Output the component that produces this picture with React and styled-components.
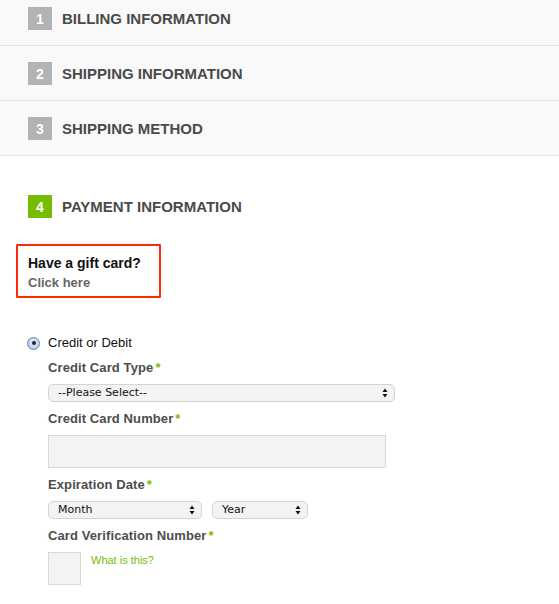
import React from "react";
import styled, { createGlobalStyle } from "styled-components";

const Global = createGlobalStyle`
  html, body { margin: 0; padding: 0; background: #fff; }
  body { font-family: "Liberation Sans", Arial, sans-serif; overflow: hidden; }
`;

const Page = styled.div`
  width: 559px;
  margin-top: -9px;
`;

const Step = styled.div`
  display: flex;
  align-items: center;
  gap: 10px;
  padding: ${(p) => (p.$active ? "39px 28px 26px" : "16px 28px 15px")};
  background: ${(p) => (p.$active ? "#fff" : "#f9f9f9")};
  border-bottom: ${(p) => (p.$active ? "none" : "1px solid #e6e6e6")};
`;

const Badge = styled.span`
  width: 24px;
  height: 23px;
  display: flex;
  align-items: center;
  justify-content: center;
  background: ${(p) => (p.$active ? "#78bc00" : "#b3b3b3")};
  color: #fff;
  font-weight: bold;
  font-size: 14px;
`;

const StepTitle = styled.span`
  font-size: 15px;
  font-weight: bold;
  color: #4a4a4a;
  text-transform: uppercase;
`;

const GiftBox = styled.div`
  margin-left: 16px;
  width: 131px;
  border: 2px solid #ff2a0a;
  border-radius: 1px;
  padding: 8px 0 4px 10px;
`;

const GiftTitle = styled.div`
  font-size: 14px;
  line-height: 18px;
  font-weight: bold;
  color: #111;
`;

const GiftLink = styled.a`
  display: block;
  margin-top: 2px;
  font-size: 13px;
  line-height: 18px;
  font-weight: bold;
  color: #666;
  text-decoration: none;
`;

const Form = styled.div`
  padding-top: 37px;
`;

const RadioRow = styled.label`
  display: flex;
  align-items: center;
  gap: 8px;
  padding-left: 27px;
  font-size: 13px;
  line-height: 16px;
  color: #111;
`;

const Radio = styled.span`
  width: 13px;
  height: 13px;
  box-sizing: border-box;
  border-radius: 50%;
  border: 1px solid #6d7f9c;
  background: radial-gradient(circle at 50% 40%, #eaf2fc 0%, #b7cfee 70%, #9fbde6 100%);
  display: flex;
  align-items: center;
  justify-content: center;
  &::after {
    content: "";
    width: 4px;
    height: 4px;
    border-radius: 50%;
    background: #1c2433;
  }
`;

const Fields = styled.div`
  padding-left: 48px;
  display: flex;
  flex-direction: column;
`;

const Field = styled.div`
  margin-top: 9px;
  display: flex;
  flex-direction: column;
  align-items: flex-start;
`;

const Label = styled.div`
  font-size: 13px;
  line-height: 16px;
  font-weight: bold;
  color: #4d4d4d;
  letter-spacing: 0.1px;
  margin-bottom: 8px;
`;

const Req = styled.span`
  color: #78bc00;
  margin-left: 2px;
`;

const SelectWrap = styled.div`
  position: relative;
  width: ${(p) => p.$w}px;
  height: 18px;
`;

const Select = styled.select`
  display: block;
  appearance: none;
  -webkit-appearance: none;
  width: 100%;
  height: 18px;
  margin: 0;
  box-sizing: border-box;
  border: 1px solid #d4d4d4;
  border-radius: 5px;
  background: #f3f3f3;
  font-family: "DejaVu Sans", sans-serif;
  font-size: 11px;
  color: #111;
  padding: 0 0 0 9px;
  line-height: 16px;
  outline: none;
`;

const Arrows = styled.svg`
  position: absolute;
  right: 7px;
  top: 4px;
  pointer-events: none;
`;

const TextInput = styled.input`
  display: block;
  box-sizing: border-box;
  width: ${(p) => p.$w}px;
  height: ${(p) => p.$h}px;
  border: 1px solid #d9d9d9;
  background: #f3f3f3;
  outline: none;
  margin: 0;
`;

const Row = styled.div`
  display: flex;
  align-items: flex-start;
  gap: ${(p) => p.$gap}px;
`;

const HelpLink = styled.a`
  font-size: 11px;
  line-height: 14px;
  color: #78bc00;
  margin-top: 1px;
  text-decoration: none;
`;

const StepArrow = () => (
  <Arrows width="6" height="10" viewBox="0 0 6 10">
    <path d="M3 0.5 L5.5 4 L0.5 4 Z" fill="#111" />
    <path d="M0.5 6 L5.5 6 L3 9.5 Z" fill="#111" />
  </Arrows>
);

const Dropdown = ({ w, children }) => (
  <SelectWrap $w={w}>
    <Select defaultValue="">{children}</Select>
    <StepArrow />
  </SelectWrap>
);

export default function App() {
  return (
    <>
      <Global />
      <Page>
        <Step>
          <Badge>1</Badge>
          <StepTitle>Billing Information</StepTitle>
        </Step>
        <Step>
          <Badge>2</Badge>
          <StepTitle>Shipping Information</StepTitle>
        </Step>
        <Step>
          <Badge>3</Badge>
          <StepTitle>Shipping Method</StepTitle>
        </Step>
        <Step $active>
          <Badge $active>4</Badge>
          <StepTitle>Payment Information</StepTitle>
        </Step>
        <GiftBox>
          <GiftTitle>Have a gift card?</GiftTitle>
          <GiftLink href="#">Click here</GiftLink>
        </GiftBox>
        <Form>
          <RadioRow>
            <Radio />
            Credit or Debit
          </RadioRow>
          <Fields>
            <Field>
              <Label>
                Credit Card Type<Req>*</Req>
              </Label>
              <Dropdown w={347}>
                <option value="">--Please Select--</option>
              </Dropdown>
            </Field>
            <Field>
              <Label>
                Credit Card Number<Req>*</Req>
              </Label>
              <TextInput $w={338} $h={33} />
            </Field>
            <Field>
              <Label>
                Expiration Date<Req>*</Req>
              </Label>
              <Row $gap={10}>
                <Dropdown w={154}>
                  <option value="">Month</option>
                </Dropdown>
                <Dropdown w={96}>
                  <option value="">Year</option>
                </Dropdown>
              </Row>
            </Field>
            <Field>
              <Label>
                Card Verification Number<Req>*</Req>
              </Label>
              <Row $gap={10}>
                <TextInput $w={33} $h={33} />
                <HelpLink href="#">What is this?</HelpLink>
              </Row>
            </Field>
          </Fields>
        </Form>
      </Page>
    </>
  );
}
